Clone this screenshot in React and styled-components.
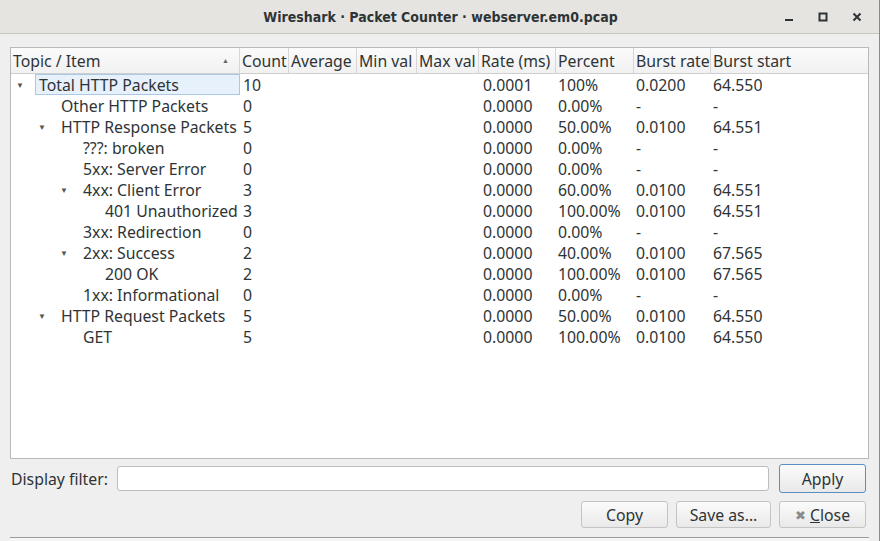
import React from 'react';
import styled, { createGlobalStyle } from 'styled-components';

const GlobalStyle = createGlobalStyle`
    html, body {
        margin: 0;
        padding: 0;
        background: #efefef;
    }
    body {
        font-family: "Noto Sans", "Open Sans", sans-serif;
        font-size: 15.8px;
        color: #2e3436;
    }
`;

const COLUMNS = '229px 49px 68px 60px 62px 77px 78px 77px 1fr';

const Window = styled.div`
    width: 880px;
    height: 541px;
    display: flex;
    flex-direction: column;
    background: #efefef;
    box-sizing: border-box;
    border-right: 1px solid #8a8a8a;
    overflow: hidden;
`;

const TitleBar = styled.div`
    height: 33px;
    flex: none;
    display: flex;
    align-items: center;
    justify-content: center;
    position: relative;
    background: #e6e4e1;
    border-bottom: 1px solid #c8c5c1;
`;

const Title = styled.div`
    font-family: "DejaVu Sans Condensed", "DejaVu Sans", sans-serif;
    font-size: 14px;
    font-weight: 600;
    color: #2e3436;
    margin-left: 2px;
`;

const WindowControls = styled.div`
    position: absolute;
    right: 16px;
    top: 0;
    bottom: 0;
    display: flex;
    align-items: center;
    gap: 22px;
`;

const Body = styled.div`
    flex: 1;
    display: flex;
    flex-direction: column;
    padding: 13px 10px 0 10px;
`;

const Table = styled.div`
    height: 410px;
    background: #fff;
    border: 1px solid #b9b9b9;
    display: flex;
    flex-direction: column;
`;

const HeaderRow = styled.div`
    display: grid;
    grid-template-columns: ${COLUMNS};
    height: 25px;
    border-bottom: 1px solid #cfcfcf;
    background: linear-gradient(#fbfbfb, #f1f1f1);
`;

const HeaderCell = styled.div`
    display: flex;
    align-items: center;
    justify-content: space-between;
    padding: 0 2px;
    border-right: ${({ last }) => (last ? 'none' : '1px solid #d6d6d6')};
    white-space: nowrap;
    overflow: hidden;
`;

const SortArrow = styled.span`
    font-size: 7px;
    color: #666;
    margin-right: 8px;
`;

const Row = styled.div`
    display: grid;
    grid-template-columns: ${COLUMNS};
    height: 21px;
    align-items: stretch;
`;

const Cell = styled.div`
    display: flex;
    align-items: center;
    padding-left: ${({ pad }) => pad ?? 3}px;
    white-space: nowrap;
    overflow: hidden;
`;

const TreeCell = styled.div`
    display: flex;
    align-items: center;
    padding-left: ${({ level }) => 5 + level * 22}px;
    white-space: nowrap;
    overflow: hidden;
`;

const Expander = styled.span`
    width: 18px;
    flex: none;
    display: flex;
    align-items: center;
    color: #555;
    font-size: 8px;
`;

const Label = styled.span`
    display: flex;
    align-items: center;
    height: 100%;
    box-sizing: border-box;
    padding-left: 3px;
    flex: 1;
    margin-left: 1px;
    border: 1px solid ${({ selected }) => (selected ? '#a9c9e6' : 'transparent')};
    background: ${({ selected }) => (selected ? '#e6f1fb' : 'transparent')};
`;

const FilterRow = styled.div`
    display: flex;
    align-items: center;
    margin-top: 5px;
    padding-right: 3px;
    gap: 9px;
`;

const FilterLabel = styled.span`
    padding-left: 1px;
`;

const FilterInput = styled.input`
    flex: 1;
    height: 25px;
    box-sizing: border-box;
    border: 1px solid #bdbdbd;
    border-radius: 3px;
    background: #fff;
    margin-right: 1px;
    outline: none;
`;

const Button = styled.button`
    height: ${({ tall }) => (tall ? 29 : 27)}px;
    box-sizing: border-box;
    font-family: "Noto Sans", "Open Sans", sans-serif;
    font-size: 15.8px;
    color: #2e3436;
    border: 1px solid ${({ primary }) => (primary ? '#5a8fc2' : '#c4c4c4')};
    border-radius: 3px;
    background: linear-gradient(#fbfbfb, #e9e9e9);
    display: flex;
    align-items: center;
    justify-content: center;
    gap: 4px;
    padding: 0;
    width: ${({ w }) => w || 87}px;
`;

const ButtonRow = styled.div`
    display: flex;
    justify-content: flex-end;
    gap: 8px;
    margin-top: 8px;
    padding-right: 3px;
`;

const CloseMark = styled.span`
    color: #8b8b8b;
    font-size: 13px;
`;

const Underline = styled.span`
    text-decoration: underline;
`;

const BottomEdge = styled.div`
    margin-top: auto;
    height: 3px;
    border-top: 1px solid #9a9a9a;
    background: #f6f6f6;
`;

const rows = [
    { name: 'Total HTTP Packets', level: 0, open: true, selected: true, count: '10', rate: '0.0001', pct: '100%', br: '0.0200', bs: '64.550' },
    { name: 'Other HTTP Packets', level: 1, count: '0', rate: '0.0000', pct: '0.00%', br: '-', bs: '-' },
    { name: 'HTTP Response Packets', level: 1, open: true, count: '5', rate: '0.0000', pct: '50.00%', br: '0.0100', bs: '64.551' },
    { name: '???: broken', level: 2, count: '0', rate: '0.0000', pct: '0.00%', br: '-', bs: '-' },
    { name: '5xx: Server Error', level: 2, count: '0', rate: '0.0000', pct: '0.00%', br: '-', bs: '-' },
    { name: '4xx: Client Error', level: 2, open: true, count: '3', rate: '0.0000', pct: '60.00%', br: '0.0100', bs: '64.551' },
    { name: '401 Unauthorized', level: 3, count: '3', rate: '0.0000', pct: '100.00%', br: '0.0100', bs: '64.551' },
    { name: '3xx: Redirection', level: 2, count: '0', rate: '0.0000', pct: '0.00%', br: '-', bs: '-' },
    { name: '2xx: Success', level: 2, open: true, count: '2', rate: '0.0000', pct: '40.00%', br: '0.0100', bs: '67.565' },
    { name: '200 OK', level: 3, count: '2', rate: '0.0000', pct: '100.00%', br: '0.0100', bs: '67.565' },
    { name: '1xx: Informational', level: 2, count: '0', rate: '0.0000', pct: '0.00%', br: '-', bs: '-' },
    { name: 'HTTP Request Packets', level: 1, open: true, count: '5', rate: '0.0000', pct: '50.00%', br: '0.0100', bs: '64.550' },
    { name: 'GET', level: 2, count: '5', rate: '0.0000', pct: '100.00%', br: '0.0100', bs: '64.550' },
];

const headers = ['Count', 'Average', 'Min val', 'Max val', 'Rate (ms)', 'Percent', 'Burst rate', 'Burst start'];

function App() {
    return (
        <Window>
            <GlobalStyle />
            <TitleBar>
                <Title>Wireshark · Packet Counter · webserver.em0.pcap</Title>
                <WindowControls>
                    <svg width="12" height="12" viewBox="0 0 12 12"><rect x="2" y="8" width="8" height="2" fill="#2e3436" /></svg>
                    <svg width="12" height="12" viewBox="0 0 12 12"><rect x="2.5" y="2.5" width="7" height="7" fill="none" stroke="#2e3436" strokeWidth="2" /></svg>
                    <svg width="12" height="12" viewBox="0 0 12 12"><path d="M2.5 2.5 L9.5 9.5 M9.5 2.5 L2.5 9.5" stroke="#2e3436" strokeWidth="2" /></svg>
                </WindowControls>
            </TitleBar>
            <Body>
                <Table>
                    <HeaderRow>
                        <HeaderCell>
                            <span>Topic / Item</span>
                            <SortArrow>▲</SortArrow>
                        </HeaderCell>
                        {headers.map((h, i) => (
                            <HeaderCell key={h} last={i === headers.length - 1}>{h}</HeaderCell>
                        ))}
                    </HeaderRow>
                    {rows.map((r) => (
                        <Row key={r.name}>
                            <TreeCell level={r.level}>
                                <Expander>{r.open ? '▼' : ''}</Expander>
                                <Label selected={r.selected}>{r.name}</Label>
                            </TreeCell>
                            <Cell>{r.count}</Cell>
                            <Cell />
                            <Cell />
                            <Cell />
                            <Cell pad={4}>{r.rate}</Cell>
                            <Cell pad={2}>{r.pct}</Cell>
                            <Cell pad={2}>{r.br}</Cell>
                            <Cell pad={2}>{r.bs}</Cell>
                        </Row>
                    ))}
                </Table>
                <FilterRow>
                    <FilterLabel>Display filter:</FilterLabel>
                    <FilterInput />
                    <Button primary tall>Apply</Button>
                </FilterRow>
                <ButtonRow>
                    <Button>Copy</Button>
                    <Button w={95}>Save as...</Button>
                    <Button>
                        <CloseMark>✖</CloseMark>
                        <span><Underline>C</Underline>lose</span>
                    </Button>
                </ButtonRow>
                <BottomEdge />
            </Body>
        </Window>
    );
}

export default App;
